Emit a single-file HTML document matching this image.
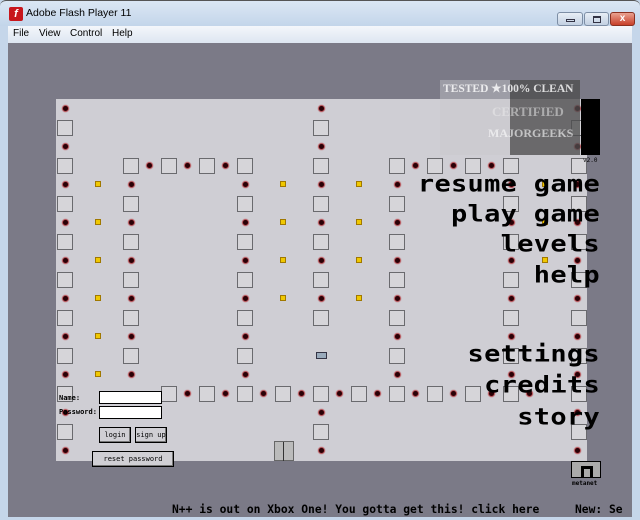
<!DOCTYPE html>
<html><head><meta charset="utf-8"><style>
*{margin:0;padding:0;box-sizing:border-box}
body{width:640px;height:520px;overflow:hidden;background:#c5d6ea;position:relative;font-family:"Liberation Sans",sans-serif}
.abs{position:absolute}
#title{left:0;top:0;width:640px;height:26px;background:linear-gradient(#dbe7f4,#c3d5ea);border-top:1px solid #555;border-radius:6px 6px 0 0}
#menu{left:8px;top:26px;width:624px;height:17px;background:linear-gradient(#f4f7fb,#dde6f1);font-size:10px;color:#000}
#menu span{position:absolute;top:2px}
#stage{left:8px;top:43px;width:624px;height:474px;background:#7b7a87;overflow:hidden}
#grid{left:56px;top:99px;width:531px;height:362px;background:#cfced4}
.sq{position:absolute;width:16px;height:16px;background:#d6d5d9;border:1px solid #6a6a6e}
.mn{position:absolute;width:5px;height:5px;border-radius:50%;background:#2a0006;box-shadow:0 0 1px 1px #b03a40}
.gd{position:absolute;width:6px;height:6px;background:#f0c800;border:1px solid #a07800}
.mt{position:absolute;right:40px;font-family:"DejaVu Sans Mono","Liberation Mono",monospace;font-weight:bold;font-size:27px;line-height:27px;color:#000;letter-spacing:0.3px;text-align:right;transform:scaleY(0.85);transform-origin:right center}
.btn{position:absolute;background:#d0cfd4;border:1px solid #000;box-shadow:inset -1px -1px 0 #777;font-family:"DejaVu Sans Mono",monospace;font-size:7px;text-align:center}
.inp{position:absolute;background:#fff;border:1px solid #000}
.lbl{position:absolute;font-family:"DejaVu Sans Mono",monospace;font-size:7px;font-weight:bold}
.tick{position:absolute;top:503px;font-family:"DejaVu Sans Mono",monospace;font-weight:bold;font-size:11.3px;color:#000;white-space:nowrap}
.wb{position:absolute;top:11px;height:14px;border:1px solid #7d8ea5;border-radius:3px;background:linear-gradient(#e8eef6,#c2d0e2)}
</style></head><body>
<div id="title" class="abs">
 <div class="abs" style="left:9px;top:6px;width:14px;height:14px;background:#c8161c;border-radius:2px;color:#fff;font-size:11px;font-style:italic;font-weight:bold;line-height:14px;text-align:center">f</div>
 <div class="abs" style="left:26px;top:6px;font-size:10.5px;color:#000">Adobe Flash Player 11</div>
 <div class="wb" style="left:557px;width:26px"><div class="abs" style="left:8px;top:6px;width:9px;height:3px;border:1px solid #334"></div></div>
 <div class="wb" style="left:584px;width:25px"><div class="abs" style="left:8px;top:3px;width:8px;height:7px;border:1px solid #334;border-top-width:2px"></div></div>
 <div class="wb" style="left:610px;width:25px;background:linear-gradient(#e9a190,#c8402a);border-color:#8a3020;color:#fff;font-size:10px;font-weight:bold;text-align:center;line-height:12px">x</div>
</div>
<div id="menu" class="abs"><span style="left:5px">File</span><span style="left:31px">View</span><span style="left:62px">Control</span><span style="left:104px">Help</span></div>
<div id="stage" class="abs"></div>
<div id="grid" class="abs"></div>
<div id="objs" class="abs" style="left:0;top:0"></div>
<div class="abs" style="left:440px;top:80px;width:140px;height:75px;background:rgba(200,200,205,0.45)"></div>
<div class="abs" style="left:510px;top:80px;width:70px;height:75px;background:rgba(40,40,40,0.6)"></div>
<div class="abs" style="left:443px;top:81px;font-family:'Liberation Serif',serif;font-weight:bold;font-size:11.5px;color:#fff;opacity:.8;white-space:nowrap">TESTED ★100% CLEAN</div>
<div class="abs" style="left:492px;top:104px;font-family:'Liberation Serif',serif;font-weight:bold;font-size:13px;color:#eee;opacity:.5">CERTIFIED</div>
<div class="abs" style="left:488px;top:126px;font-family:'Liberation Serif',serif;font-weight:bold;font-size:12px;color:#fff;opacity:.6">MAJORGEEKS</div>
<div class="abs" style="left:581px;top:99px;width:19px;height:56px;background:#000"></div>
<div class="abs" style="left:583px;top:157px;font-family:'DejaVu Sans Mono',monospace;font-size:6px">v2.0</div>
<div class="mt" style="top:171px">resume game</div>
<div class="mt" style="top:201px">play game</div>
<div class="mt" style="top:231px">levels</div>
<div class="mt" style="top:262px">help</div>
<div class="mt" style="top:341px">settings</div>
<div class="mt" style="top:372px">credits</div>
<div class="mt" style="top:404px">story</div>
<div class="lbl" style="left:59px;top:394px">Name:</div>
<div class="lbl" style="left:59px;top:408px">Password:</div>
<div class="inp" style="left:99px;top:391px;width:63px;height:13px"></div>
<div class="inp" style="left:99px;top:406px;width:63px;height:13px"></div>
<div class="btn" style="left:99px;top:427px;width:32px;height:16px;line-height:14px">login</div>
<div class="btn" style="left:135px;top:427px;width:32px;height:16px;line-height:14px">sign up</div>
<div class="btn" style="left:92px;top:451px;width:82px;height:16px;line-height:14px">reset password</div>
<div class="abs" style="left:274px;top:441px;width:20px;height:20px;background:#bbb;border:1px solid #666"><div class="abs" style="left:8px;top:0;width:1px;height:19px;background:#333"></div></div>
<div class="abs" style="left:316px;top:352px;width:11px;height:7px;background:#9ab;border:1px solid #334"></div>
<div class="abs" style="left:571px;top:461px;width:30px;height:17px;border:1px solid #000;background:#aaa"><div class="abs" style="left:9px;top:4px;width:3px;height:11px;background:#000"></div><div class="abs" style="left:9px;top:4px;width:12px;height:3px;background:#000"></div><div class="abs" style="left:18px;top:4px;width:3px;height:11px;background:#000"></div></div>
<div class="abs" style="left:572px;top:480px;font-family:'DejaVu Sans Mono',monospace;font-size:6px;font-weight:bold">metanet</div>
<div class="tick" style="left:172px">N++ is out on Xbox One! You gotta get this! click here</div>
<div class="tick" style="left:575px">New: Se</div>
<div class="abs" style="left:632px;top:43px;width:8px;height:477px;background:#c5d6ea"></div>
<script>
var o=document.getElementById('objs'),h='';
function S(x,y){h+='<div class="sq" style="left:'+x+'px;top:'+y+'px"></div>'}
function M(x,y){h+='<div class="mn" style="left:'+(x-2)+'px;top:'+(y-2)+'px"></div>'}
function G(x,y){h+='<div class="gd" style="left:'+(x-3)+'px;top:'+(y-3)+'px"></div>'}
var R=[184,222,260,298,336,374];
[108,146].forEach(function(y){M(65,y);M(321,y);M(577,y)});
S(57,120);S(313,120);S(571,120);
[57,123,161,199,237,313,389,427,465,503,571].forEach(function(x){S(x,158)});
[149,187,225,415,453,491].forEach(function(x){M(x,165)});
for(var i=0;i<5;i++){var y=196+38*i;S(57,y);S(123,y);S(237,y);S(389,y);S(503,y);S(571,y);if(i<4)S(313,y);}
R.forEach(function(y,i){M(65,y);M(131,y);M(245,y);M(397,y);M(511,y);M(577,y);G(98,y);if(i<4){M(321,y);G(283,y);G(359,y);}if(i<3)G(545,y);});
[57,161,199,237,275,313,351,389,427,465,503,571].forEach(function(x){S(x,386)});
[187,225,263,301,339,377,415,453,491,529].forEach(function(x){M(x,393)});
M(65,412);M(321,412);M(577,412);S(57,424);S(313,424);S(571,424);M(65,450);M(321,450);M(577,450);
o.innerHTML=h;
</script>
</body></html>
